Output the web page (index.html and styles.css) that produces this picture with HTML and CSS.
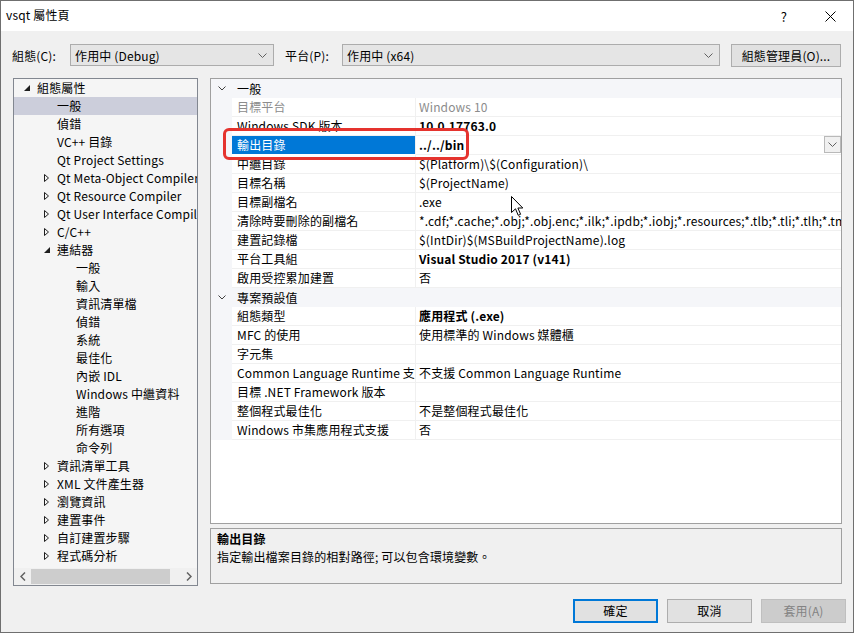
FILE: index.html
```html
<!DOCTYPE html>
<html lang="zh-Hant">
<head>
<meta charset="utf-8">
<title>vsqt 屬性頁</title>
<link rel="stylesheet" href="styles.css">
</head>
<body>
<div class="window">
  <div class="titlebar">
    <span class="title">vsqt 屬性頁</span>
    <span class="help">?</span>
    <span class="close"><svg width="11" height="11" viewBox="0 0 11 11"><path d="M0.5 0.5 L10.5 10.5 M10.5 0.5 L0.5 10.5" stroke="#000" stroke-width="1" fill="none"/></svg></span>
  </div>
  <div class="client">
    <div class="toolbar">
      <span class="lbl">組態(C):</span>
      <div class="combo combo-config"><span>作用中 (Debug)</span><svg class="chev" width="9" height="5" viewBox="0 0 9 5"><path d="M0.5 0.5 L4.5 4.5 L8.5 0.5" stroke="#606060" fill="none"/></svg></div>
      <span class="lbl lbl-platform">平台(P):</span>
      <div class="combo combo-platform"><span>作用中 (x64)</span><svg class="chev" width="9" height="5" viewBox="0 0 9 5"><path d="M0.5 0.5 L4.5 4.5 L8.5 0.5" stroke="#606060" fill="none"/></svg></div>
      <div class="btn btn-manager">組態管理員(O)...</div>
    </div>
    <div class="main">
      <div class="tree">
        <div class="tree-rows">
          <div class="trow l0"><span class="exp"><svg width="8" height="8" viewBox="0 0 8 8"><path d="M1 7 L7 7 L7 1 Z" fill="#1e1e1e"/></svg></span>組態屬性</div>
          <div class="trow l1 sel"><span class="exp"></span>一般</div>
          <div class="trow l1"><span class="exp"></span>偵錯</div>
          <div class="trow l1"><span class="exp"></span>VC++ 目錄</div>
          <div class="trow l1"><span class="exp"></span>Qt Project Settings</div>
          <div class="trow l1"><span class="exp"><svg width="8" height="10" viewBox="0 0 8 10"><path d="M1.5 1.5 L1.5 8.5 L5.5 5 Z" stroke="#1e1e1e" fill="none"/></svg></span>Qt Meta-Object Compiler</div>
          <div class="trow l1"><span class="exp"><svg width="8" height="10" viewBox="0 0 8 10"><path d="M1.5 1.5 L1.5 8.5 L5.5 5 Z" stroke="#1e1e1e" fill="none"/></svg></span>Qt Resource Compiler</div>
          <div class="trow l1"><span class="exp"><svg width="8" height="10" viewBox="0 0 8 10"><path d="M1.5 1.5 L1.5 8.5 L5.5 5 Z" stroke="#1e1e1e" fill="none"/></svg></span>Qt User Interface Compiler</div>
          <div class="trow l1"><span class="exp"><svg width="8" height="10" viewBox="0 0 8 10"><path d="M1.5 1.5 L1.5 8.5 L5.5 5 Z" stroke="#1e1e1e" fill="none"/></svg></span>C/C++</div>
          <div class="trow l1"><span class="exp"><svg width="8" height="8" viewBox="0 0 8 8"><path d="M1 7 L7 7 L7 1 Z" fill="#1e1e1e"/></svg></span>連結器</div>
          <div class="trow l2"><span class="exp"></span>一般</div>
          <div class="trow l2"><span class="exp"></span>輸入</div>
          <div class="trow l2"><span class="exp"></span>資訊清單檔</div>
          <div class="trow l2"><span class="exp"></span>偵錯</div>
          <div class="trow l2"><span class="exp"></span>系統</div>
          <div class="trow l2"><span class="exp"></span>最佳化</div>
          <div class="trow l2"><span class="exp"></span>內嵌 IDL</div>
          <div class="trow l2"><span class="exp"></span>Windows 中繼資料</div>
          <div class="trow l2"><span class="exp"></span>進階</div>
          <div class="trow l2"><span class="exp"></span>所有選項</div>
          <div class="trow l2"><span class="exp"></span>命令列</div>
          <div class="trow l1"><span class="exp"><svg width="8" height="10" viewBox="0 0 8 10"><path d="M1.5 1.5 L1.5 8.5 L5.5 5 Z" stroke="#1e1e1e" fill="none"/></svg></span>資訊清單工具</div>
          <div class="trow l1"><span class="exp"><svg width="8" height="10" viewBox="0 0 8 10"><path d="M1.5 1.5 L1.5 8.5 L5.5 5 Z" stroke="#1e1e1e" fill="none"/></svg></span>XML 文件產生器</div>
          <div class="trow l1"><span class="exp"><svg width="8" height="10" viewBox="0 0 8 10"><path d="M1.5 1.5 L1.5 8.5 L5.5 5 Z" stroke="#1e1e1e" fill="none"/></svg></span>瀏覽資訊</div>
          <div class="trow l1"><span class="exp"><svg width="8" height="10" viewBox="0 0 8 10"><path d="M1.5 1.5 L1.5 8.5 L5.5 5 Z" stroke="#1e1e1e" fill="none"/></svg></span>建置事件</div>
          <div class="trow l1"><span class="exp"><svg width="8" height="10" viewBox="0 0 8 10"><path d="M1.5 1.5 L1.5 8.5 L5.5 5 Z" stroke="#1e1e1e" fill="none"/></svg></span>自訂建置步驟</div>
          <div class="trow l1"><span class="exp"><svg width="8" height="10" viewBox="0 0 8 10"><path d="M1.5 1.5 L1.5 8.5 L5.5 5 Z" stroke="#1e1e1e" fill="none"/></svg></span>程式碼分析</div>
        </div>
        <div class="hscroll">
          <span class="sarrow"><svg width="6" height="9" viewBox="0 0 6 9"><path d="M5 0.5 L1 4.5 L5 8.5" stroke="#606060" stroke-width="1.5" fill="none"/></svg></span>
          <div class="strack"><div class="sthumb"></div></div>
          <span class="sarrow"><svg width="6" height="9" viewBox="0 0 6 9"><path d="M1 0.5 L5 4.5 L1 8.5" stroke="#606060" stroke-width="1.5" fill="none"/></svg></span>
        </div>
      </div>
      <div class="right">
        <div class="grid">
          <div class="prow cat"><span class="gut"><svg width="8" height="5" viewBox="0 0 8 5"><path d="M0.5 0.5 L4 4 L7.5 0.5" stroke="#404040" fill="none"/></svg></span><span class="catname">一般</span></div>
          <div class="prow dim"><span class="gut"></span><span class="pname">目標平台</span><span class="pval">Windows 10</span></div>
          <div class="prow"><span class="gut"></span><span class="pname">Windows SDK 版本</span><span class="pval b">10.0.17763.0</span></div>
          <div class="prow selrow"><span class="gut"></span><span class="pname">輸出目錄</span><span class="pval b">../../bin<span class="ddbtn"><svg width="9" height="5" viewBox="0 0 9 5"><path d="M0.5 0.5 L4.5 4.5 L8.5 0.5" stroke="#606060" fill="none"/></svg></span></span></div>
          <div class="prow"><span class="gut"></span><span class="pname">中繼目錄</span><span class="pval">$(Platform)\$(Configuration)\</span></div>
          <div class="prow"><span class="gut"></span><span class="pname">目標名稱</span><span class="pval">$(ProjectName)</span></div>
          <div class="prow"><span class="gut"></span><span class="pname">目標副檔名</span><span class="pval">.exe</span></div>
          <div class="prow"><span class="gut"></span><span class="pname">清除時要刪除的副檔名</span><span class="pval">*.cdf;*.cache;*.obj;*.obj.enc;*.ilk;*.ipdb;*.iobj;*.resources;*.tlb;*.tli;*.tlh;*.tmp;*.rsp;*.pgc;*.pgd;*.meta;*.tlog;*.manifest;*.res;*.pch;*.exp;*.idb</span></div>
          <div class="prow"><span class="gut"></span><span class="pname">建置記錄檔</span><span class="pval">$(IntDir)$(MSBuildProjectName).log</span></div>
          <div class="prow"><span class="gut"></span><span class="pname">平台工具組</span><span class="pval b">Visual Studio 2017 (v141)</span></div>
          <div class="prow"><span class="gut"></span><span class="pname">啟用受控累加建置</span><span class="pval">否</span></div>
          <div class="prow cat"><span class="gut"><svg width="8" height="5" viewBox="0 0 8 5"><path d="M0.5 0.5 L4 4 L7.5 0.5" stroke="#404040" fill="none"/></svg></span><span class="catname">專案預設值</span></div>
          <div class="prow"><span class="gut"></span><span class="pname">組態類型</span><span class="pval b">應用程式 (.exe)</span></div>
          <div class="prow"><span class="gut"></span><span class="pname">MFC 的使用</span><span class="pval">使用標準的 Windows 媒體櫃</span></div>
          <div class="prow"><span class="gut"></span><span class="pname">字元集</span><span class="pval"></span></div>
          <div class="prow"><span class="gut"></span><span class="pname">Common Language Runtime 支援</span><span class="pval">不支援 Common Language Runtime</span></div>
          <div class="prow"><span class="gut"></span><span class="pname">目標 .NET Framework 版本</span><span class="pval"></span></div>
          <div class="prow"><span class="gut"></span><span class="pname">整個程式最佳化</span><span class="pval">不是整個程式最佳化</span></div>
          <div class="prow"><span class="gut"></span><span class="pname">Windows 市集應用程式支援</span><span class="pval">否</span></div>
        </div>
        <div class="desc">
          <div class="desc-title">輸出目錄</div>
          <div class="desc-text">指定輸出檔案目錄的相對路徑; 可以包含環境變數。</div>
        </div>
      </div>
    </div>
    <div class="buttons">
      <div class="btn dlg default">確定</div>
      <div class="btn dlg">取消</div>
      <div class="btn dlg disabled">套用(A)</div>
    </div>
  </div>
  <div class="annot"></div>
  <svg class="cursor" width="13" height="21" viewBox="0 0 13 21"><path d="M0.5 0.5 L0.5 16.5 L4.5 12.8 L7.2 19.3 L9.6 18.3 L6.9 12 L11.8 12 Z" fill="#fff" stroke="#000" stroke-width="1" stroke-linejoin="miter"/></svg>
</div>
</body>
</html>
```
FILE: styles.css
```css
* { box-sizing: border-box; }
html, body { margin: 0; padding: 0; }
body {
  font-family: "Noto Sans CJK TC", "Noto Sans", sans-serif;
  font-size: 12px;
  letter-spacing: 0.15px;
  color: #000;
  background: #fff;
}
.window {
  position: relative;
  width: 854px;
  height: 633px;
  border: 1px solid #6f6f6f;
  background: #f0f0f0;
  display: flex;
  flex-direction: column;
  overflow: hidden;
}
.titlebar {
  height: 30px;
  background: #fff;
  display: flex;
  align-items: center;
  padding-left: 5px;
  flex: none;
}
.title { flex: 1; line-height: 16px; margin-top: -2px; }
.help { width: 46px; text-align: center; font-size: 13px; margin-right: 0; }
.close { width: 46px; display: flex; justify-content: center; align-items: center; }
.client {
  flex: 1;
  display: flex;
  flex-direction: column;
  padding: 13px 7px 0 11px;
}
.toolbar {
  display: flex;
  align-items: center;
  height: 23px;
}
.lbl { width: 58px; line-height: 16px; }
.lbl-platform { margin-left: 11px; width: 57px; }
.combo {
  height: 22px;
  background: #e5e5e5;
  border: 1px solid #acacac;
  display: flex;
  align-items: center;
  justify-content: space-between;
  padding: 0 6px 0 4px;
  align-self: flex-start;
}
.combo-config { width: 204px; }
.combo-platform { width: 378px; }
.chev { margin-top: 1px; }
.btn {
  background: #e1e1e1;
  border: 1px solid #adadad;
  display: flex;
  align-items: center;
  justify-content: center;
  line-height: 16px;
}
.btn-manager { width: 110px; height: 23px; margin-left: 11px; }
.main {
  display: flex;
  align-items: flex-start;
  margin-top: 11px;
  gap: 12px;
}
.tree {
  width: 185px;
  height: 508px;
  margin-left: 1px;
  border: 1px solid #828790;
  background: #f5f5f5;
  display: flex;
  flex-direction: column;
}
.tree-rows { flex: 1; overflow: hidden; }
.trow {
  height: 18px;
  line-height: 18px;
  white-space: nowrap;
  display: flex;
  align-items: center;
  overflow: hidden;
}
.trow.l0 { padding-left: 8px; }
.trow.l1 { padding-left: 28px; }
.trow.l2 { padding-left: 47px; }
.trow.sel { background: #cccedb; }
.exp { width: 15px; flex: none; display: flex; align-items: center; height: 18px; }
.l0 .exp svg { margin-left: 1px; margin-top: -1px; }
.l1 .exp svg { margin-left: 1px; }
.hscroll {
  height: 17px;
  display: flex;
  align-items: center;
  background: #f0f0f0;
  flex: none;
}
.sarrow { width: 17px; display: flex; justify-content: center; align-items: center; }
.strack { flex: 1; height: 17px; display: flex; align-items: center; }
.sthumb { width: 139px; height: 15px; background: #cdcdcd; }
.right {
  width: 632px;
  display: flex;
  flex-direction: column;
  gap: 4px;
}
.grid {
  height: 446px;
  border: 1px solid #a0a0a0;
  background: #fff;
  overflow: hidden;
}
.prow {
  height: 19px;
  display: flex;
  white-space: nowrap;
}
.gut {
  width: 21px;
  flex: none;
  background: #f5f6f9;
  display: flex;
  align-items: center;
  justify-content: center;
}
.pname {
  width: 184px;
  flex: none;
  padding-left: 5px;
  line-height: 18px;
  overflow: hidden;
  border-bottom: 1px solid #f0f0f0;
  border-right: 1px solid #f0f0f0;
}
.pval {
  flex: 1;
  position: relative;
  padding-left: 3px;
  line-height: 18px;
  overflow: hidden;
  border-bottom: 1px solid #f0f0f0;
}
.b { font-weight: bold; }
.dim .pname, .dim .pval { color: #8c8c8c; }
.cat { background: #f5f6f9; }
.catname { padding-left: 5px; line-height: 19px; }
.selrow .pname { background: #0078d7; color: #fff; border-bottom-color: #fff; }
.ddbtn {
  position: absolute;
  right: 0;
  top: 0;
  width: 17px;
  height: 17px;
  border: 1px solid #b9b9b9;
  background: #f0f0f0;
  display: flex;
  align-items: center;
  justify-content: center;
}
.desc {
  height: 56px;
  border: 1px solid #a0a0a0;
  background: #f0f0f0;
  padding: 1px 6px;
}
.desc-title { font-weight: bold; line-height: 18px; }
.desc-text { line-height: 18px; }
.buttons {
  display: flex;
  justify-content: flex-end;
  gap: 9px;
  margin-top: 13px;
}
.btn.dlg { width: 85px; height: 24px; }
.btn.default { border: 2px solid #0078d7; }
.btn.disabled { background: #cccccc; border-color: #bfbfbf; color: #838383; }
.annot {
  position: absolute;
  left: 222px;
  top: 127px;
  width: 246px;
  height: 32px;
  border: 3px solid #e5332e;
  border-radius: 6px;
}
.cursor {
  position: absolute;
  left: 510px;
  top: 195px;
}
```
